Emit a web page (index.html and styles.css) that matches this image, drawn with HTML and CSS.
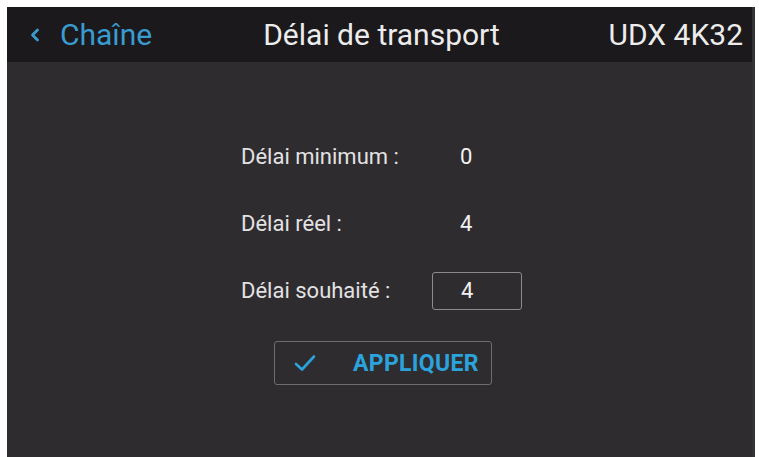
FILE: index.html
```html
<!DOCTYPE html>
<html lang="fr">
<head>
<meta charset="utf-8">
<title>Délai de transport</title>
<link rel="stylesheet" href="styles.css">
</head>
<body>
<div class="panel">
  <header class="topbar">
    <a class="back">
      <svg class="chev" width="12" height="16" viewBox="0 0 12 16"><path d="M8.5 3 L3.5 8 L8.5 13" fill="none" stroke="#3a9bd0" stroke-width="2.8" stroke-linecap="round" stroke-linejoin="round"/></svg>
      <span>Chaîne</span>
    </a>
    <div class="title">Délai de transport</div>
    <div class="device">UDX 4K32</div>
  </header>
  <main class="content">
    <div class="form">
      <div class="label">Délai minimum :</div>
      <div class="value">0</div>
      <div class="label">Délai réel :</div>
      <div class="value">4</div>
      <div class="label">Délai souhaité :</div>
      <div class="value input">4</div>
    </div>
    <button class="apply">
      <svg class="check" width="22" height="18" viewBox="0 0 22 18"><path d="M2 10 L8 15.5 L20 2.5" fill="none" stroke="#2ba3dc" stroke-width="2.6" stroke-linecap="round" stroke-linejoin="round"/></svg>
      <span>APPLIQUER</span>
    </button>
  </main>
</div>
</body>
</html>
```

FILE: styles.css
```css
html, body {
  margin: 0;
  padding: 0;
  background: #ffffff;
}
body {
  font-family: Roboto, "Liberation Sans", sans-serif;
  overflow: hidden;
}
.panel {
  margin: 7px 4px 0 7px;
  height: 450px;
  background: #2f2c30;
  border-right: 3px solid #353237;
  display: flex;
  flex-direction: column;
}
.topbar {
  height: 55px;
  background: #1b191b;
  display: flex;
  align-items: center;
  padding: 0 9px 0 22px;
  font-size: 30px;
  line-height: 1;
}
.back {
  flex: 1 1 0;
  display: flex;
  align-items: center;
  gap: 19px;
  color: #3a9bd0;
}
.chev {
  display: block;
}
.title {
  color: #ececec;
  margin-right: 9px;
  white-space: nowrap;
}
.device {
  flex: 1 1 0;
  color: #ececec;
  text-align: right;
  white-space: nowrap;
}
.content {
  flex: 1;
  display: flex;
  flex-direction: column;
  align-items: center;
  padding-top: 76px;
  padding-left: 4px;
}
.form {
  display: grid;
  grid-template-columns: 191px 90px;
  grid-auto-rows: 38px;
  row-gap: 29px;
  align-items: center;
  font-size: 22px;
  color: #e2e2e2;
}
.label {
  line-height: 38px;
}
.value {
  padding-left: 28px;
  color: #f2f2f2;
  font-weight: 400;
  line-height: 38px;
}
.input {
  height: 38px;
  box-sizing: border-box;
  border: 1.5px solid #8d898f;
  border-radius: 3px;
  line-height: 35px;
}
.apply {
  margin-top: 31px;
  margin-left: 3px;
  width: 218px;
  height: 44px;
  box-sizing: border-box;
  background: transparent;
  border: 1.5px solid #6f6b72;
  border-radius: 3px;
  display: flex;
  align-items: center;
  padding: 0 0 0 19px;
  font-family: Roboto, "Liberation Sans", sans-serif;
  font-weight: 700;
  font-size: 23px;
  letter-spacing: 0.3px;
  color: #2ba3dc;
  cursor: pointer;
}
.check {
  display: block;
  margin-right: 37px;
}
```
